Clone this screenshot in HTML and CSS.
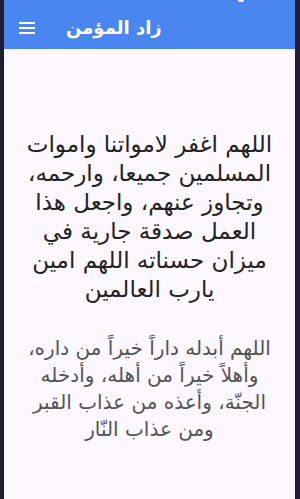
FILE: index.html
```html
<!DOCTYPE html>
<html lang="ar">
<head>
<meta charset="utf-8">
<link rel="stylesheet" href="styles.css">
</head>
<body>
<div class="frame">
  <div class="app">
    <header class="appbar">
      <svg class="menu" width="16" height="12" viewBox="0 0 16 12"><rect x="0" y="0" width="16" height="2" fill="#fff"/><rect x="0" y="5" width="16" height="2" fill="#fff"/><rect x="0" y="10" width="16" height="2" fill="#fff"/></svg>
      <h1 class="title">زاد المؤمن</h1>
      <span class="notch"></span>
    </header>
    <main class="content">
      <p class="dua">اللهم اغفر لامواتنا واموات<br>المسلمين جميعا، وارحمه،<br>وتجاوز عنهم، واجعل هذا<br>العمل صدقة جارية في<br>ميزان حسناته اللهم امين<br>يارب العالمين</p>
      <p class="dua2">اللهم أبدله داراً خيراً من داره،<br>وأهلاً خيراً من أهله، وأدخله<br>الجنّة، وأعذه من عذاب القبر<br>ومن عذاب النّار</p>
    </main>
  </div>
</div>
</body>
</html>
```
FILE: styles.css
```css
* { box-sizing: border-box; }
html, body { margin: 0; padding: 0; }
body { width: 300px; height: 499px; overflow: hidden; background: #1e1d33; font-family: "DejaVu Sans", sans-serif; }
.frame { display: flex; height: 499px; padding: 0 5px 0 4px; }
.app { flex: 1; display: flex; flex-direction: column; background: #fdf7ff; }
.appbar { position: relative; height: 49px; background: #4a86f0; display: flex; align-items: center; padding-left: 15px; }
.menu { display: block; margin-top: 6px; }
.title { margin: 6px 0 0 31px; color: #fff; font-size: 18px; font-weight: bold; direction: rtl; }
.notch { position: absolute; left: 234px; top: 0; width: 6px; height: 2px; background: #e8eefc; border-radius: 1px; }
.content { flex: 1; padding: 81px 8px 0 8px; }
.dua { margin: 0; direction: rtl; text-align: center; color: #232323; font-size: 23px; line-height: 29px; white-space: nowrap; }
.dua2 { margin: 31px 0 0; direction: rtl; text-align: center; color: #555; font-size: 20px; line-height: 27px; white-space: nowrap; }
```
